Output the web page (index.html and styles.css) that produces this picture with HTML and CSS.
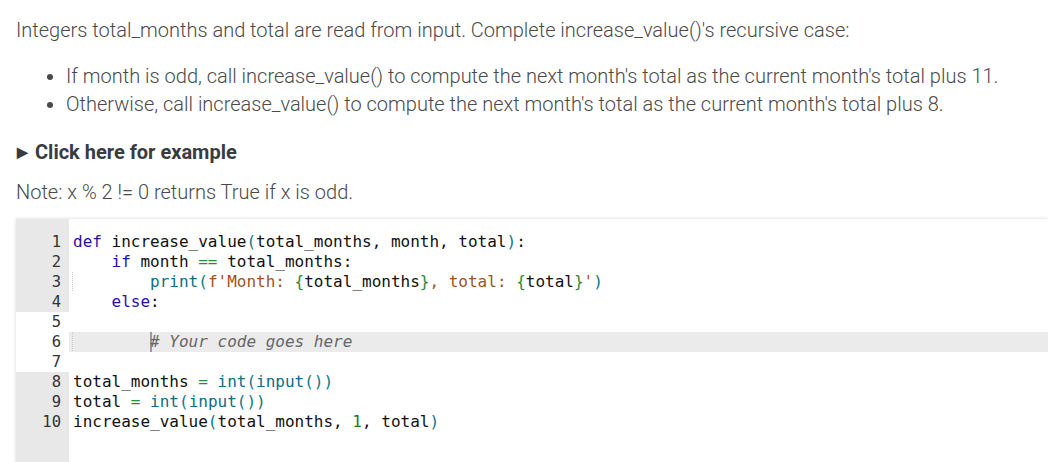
FILE: index.html
```html
<!DOCTYPE html>
<html>
<head>
<meta charset="utf-8">
<link rel="stylesheet" href="styles.css">
</head>
<body>
<div class="page">
  <p class="intro">Integers total_months and total are read from input. Complete increase_value()'s recursive case:</p>
  <ul class="bullets">
    <li>If month is odd, call increase_value() to compute the next month's total as the current month's total plus 11.</li>
    <li>Otherwise, call increase_value() to compute the next month's total as the current month's total plus 8.</li>
  </ul>
  <div class="example"><span class="tri">&#9654;</span>Click here for example</div>
  <p class="note">Note: x % 2 != 0 returns True if x is odd.</p>
  <div class="editor">
    <div class="gutter">
      <div class="ln ro">1</div>
      <div class="ln ro">2</div>
      <div class="ln ro">3</div>
      <div class="ln ro">4</div>
      <div class="ln">5</div>
      <div class="ln">6</div>
      <div class="ln">7</div>
      <div class="ln ro">8</div>
      <div class="ln ro">9</div>
      <div class="ln ro">10</div>
      <div class="gfill"></div>
    </div>
    <div class="code">
      <div class="line"><span class="kw">def</span> increase_value<span class="br">(</span>total_months, month, total<span class="br">)</span>:</div>
      <div class="line">    <span class="kw">if</span> month <span class="op">==</span> total_months:</div>
      <div class="line"><span class="guide">    </span>    <span class="bi">print</span><span class="br">(</span><span class="str">f'Month: </span><span class="op">{</span>total_months<span class="op">}</span><span class="str">, total: </span><span class="op">{</span>total<span class="op">}</span><span class="str">'</span><span class="br">)</span></div>
      <div class="line">    <span class="kw">else</span>:</div>
      <div class="line"> </div>
      <div class="line active"><span class="guide">    </span>    <span class="cursor"></span><span class="cm"># Your code goes here</span></div>
      <div class="line"> </div>
      <div class="line">total_months <span class="op">=</span> <span class="bi">int</span><span class="br">(</span><span class="bi">input</span><span class="br">())</span></div>
      <div class="line">total <span class="op">=</span> <span class="bi">int</span><span class="br">(</span><span class="bi">input</span><span class="br">())</span></div>
      <div class="line">increase_value<span class="br">(</span>total_months, <span class="num">1</span>, total<span class="br">)</span></div>
    </div>
  </div>
</div>
</body>
</html>
```

FILE: styles.css
```css
html, body {
  margin: 0;
  padding: 0;
  background: #ffffff;
}
.page {
  padding: 16px 0 0 16px;
  font-family: Roboto, "Liberation Sans", sans-serif;
  font-weight: 300;
  color: #4a4a4a;
  font-size: 20px;
}
.intro {
  margin: 0;
  line-height: 28px;
}
.bullets {
  margin: 18px 0 0 0;
  padding-left: 50px;
  line-height: 28px;
}
.example {
  margin-top: 20px;
  font-weight: 700;
  color: #373c42;
  font-size: 20px;
  line-height: 28px;
  display: flex;
  align-items: center;
}
.tri {
  font-size: 14px;
  margin-right: 7px;
  margin-left: 1px;
}
.note {
  margin: 12px 0 0 0;
  line-height: 28px;
}
.editor {
  margin-top: 13px;
  display: flex;
  box-shadow: 0 -1px 3px rgba(0,0,0,0.08), -1px 0 3px rgba(0,0,0,0.06);
  height: 260px;
  font-family: "DejaVu Sans Mono", monospace;
  font-size: 16px;
  font-weight: 400;
  color: #111;
}
.gutter {
  width: 53px;
  display: flex;
  flex-direction: column;
}
.gutter .ln {
  height: 20px;
  line-height: 20px;
  text-align: right;
  padding-right: 8px;
  color: #333;
  font-size: 15.5px;
}
.gutter .ln:first-child {
  height: 33px;
  padding-top: 13px;
  box-sizing: border-box;
}
.gutter .ro {
  background: #e8e8e8;
}
.gfill {
  flex: 1;
  background: #e8e8e8;
}
.code {
  flex: 1;
  padding-top: 13px;
}
.line {
  height: 20px;
  line-height: 20px;
  white-space: pre;
  padding-left: 4px;
}
.line.active {
  background: #ebebeb;
}
.guide {
  border-left: 1px dotted #c8c8c8;
  margin-left: -1px;
}
.cursor {
  display: inline-block;
  width: 2px;
  height: 20px;
  background: #999;
  vertical-align: top;
  margin-right: -2px;
}
.kw { color: #2d0fa6; }
.bi { color: #0b6e8a; }
.br { color: #0b7a8a; }
.op { color: #2a8a3a; }
.str { color: #a0521c; }
.cm { color: #666; font-style: italic; }
.num { color: #1a7a2a; }
```
